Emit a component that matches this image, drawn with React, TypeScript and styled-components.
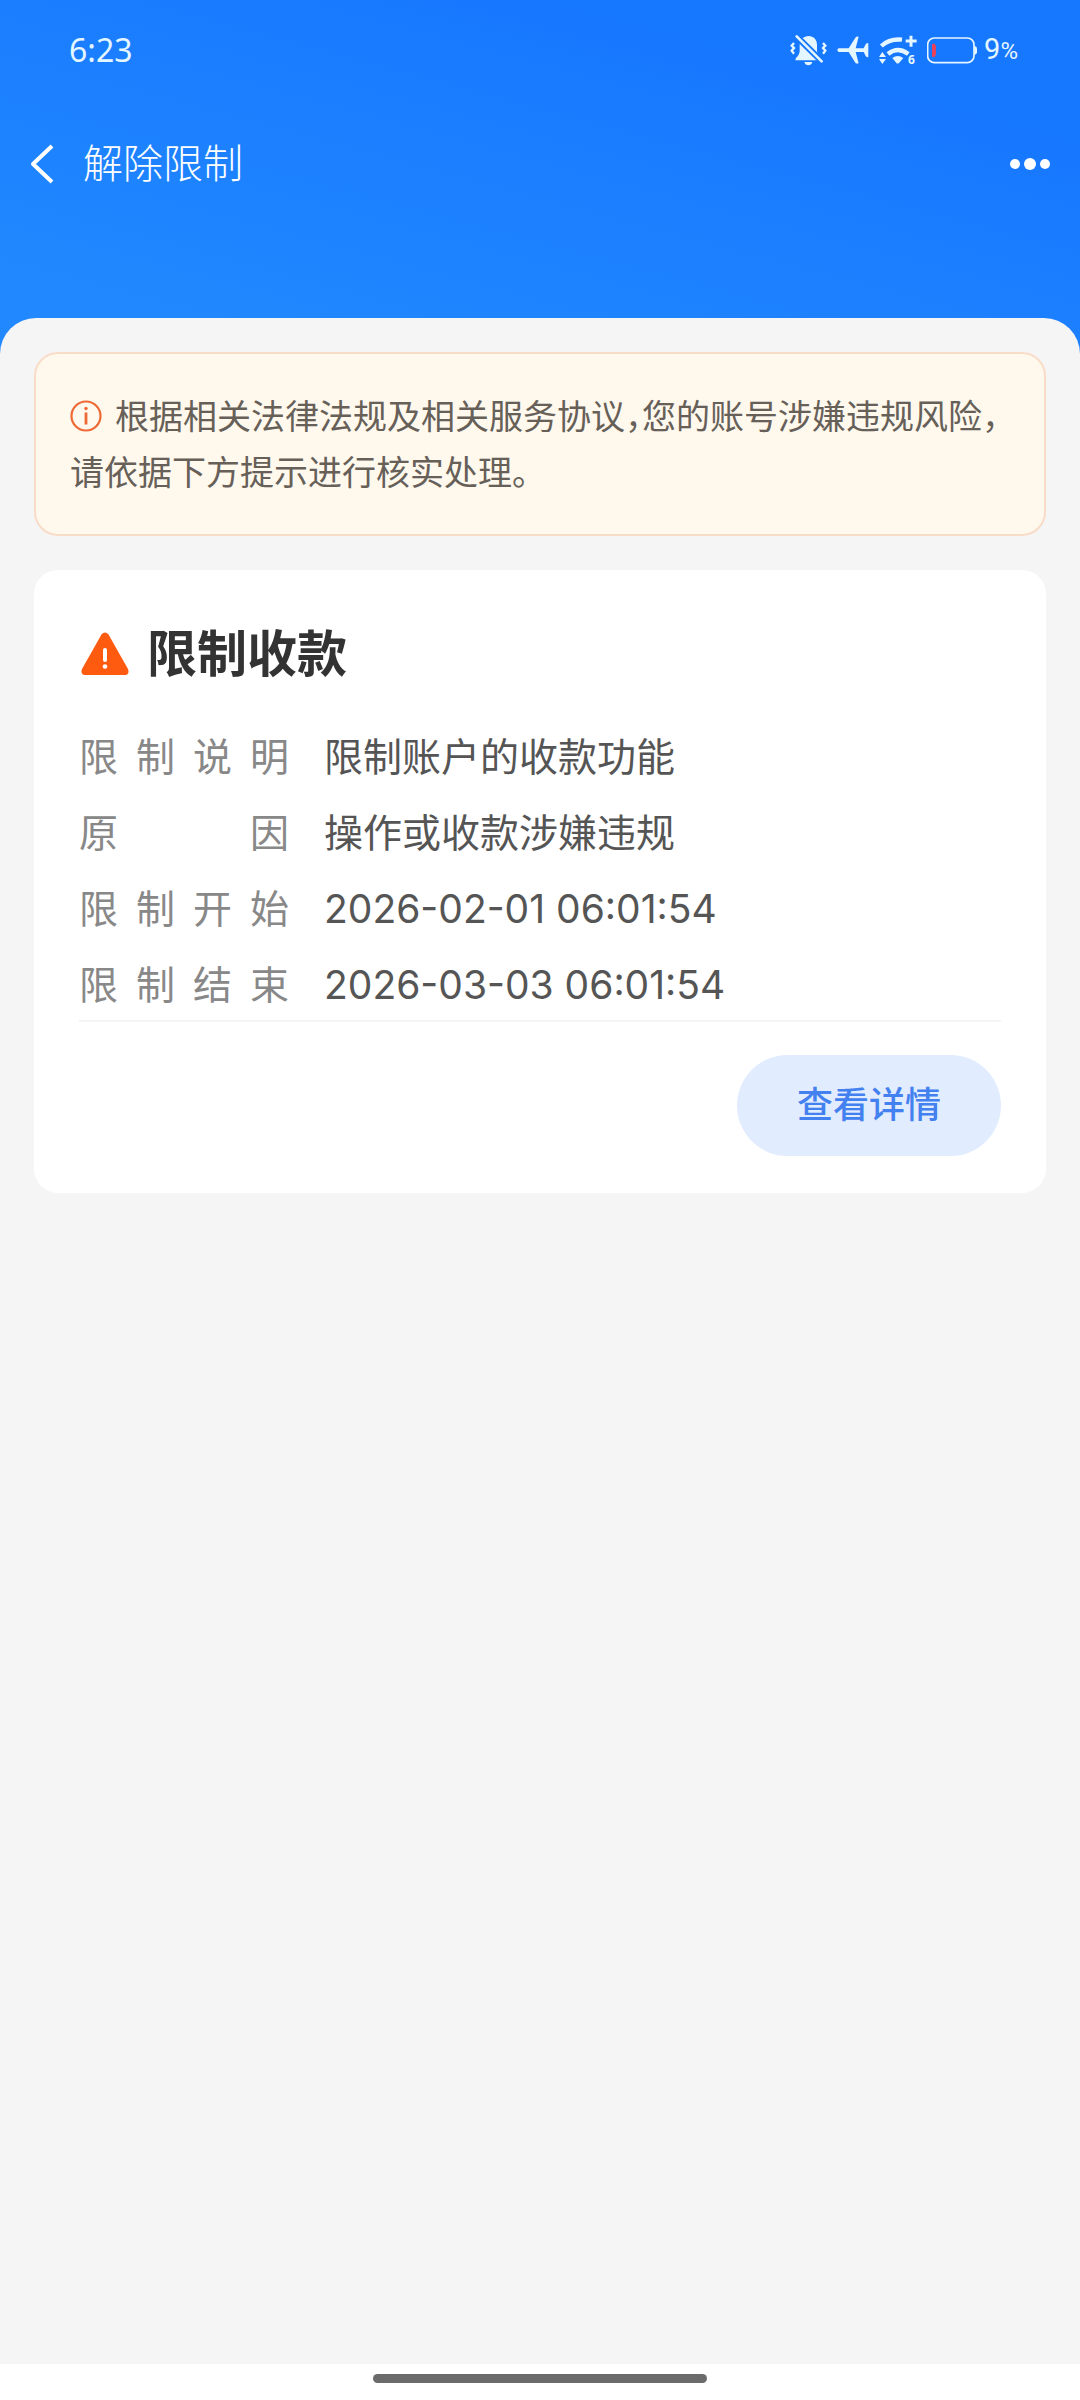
import React from "react";
import styled, { createGlobalStyle } from "styled-components";

const GlobalStyle = createGlobalStyle`
  *, *::before, *::after { box-sizing: border-box; }
  body {
    margin: 0;
    background: #f5f5f5;
    font-family: Inter, "Noto Sans CJK SC", sans-serif;
  }
`;

const Page = styled.div`
  display: flex;
  flex-direction: column;
  min-height: 100vh;
`;

const Hero = styled.header`
  padding-bottom: 152px;
  background: linear-gradient(195deg, #1677ff 20%, #1b7eff 46%, #2188ff 85%);
`;

const StatusBar = styled.div`
  display: flex;
  justify-content: space-between;
  align-items: center;
  height: 100px;
  padding: 0 62px 0 69px;
  color: #e4f6ff;
`;

const Clock = styled.time`
  font-family: "Noto Sans", sans-serif;
  font-size: 32px;
  line-height: 40px;
`;

const StatusIcons = styled.div`
  display: flex;
  align-items: center;
  gap: 10px;

  svg { display: block; }
`;

const BatteryLevel = styled.span`
  margin-left: -3px;
  font-family: Roboto, sans-serif;
  font-size: 29px;
  line-height: 40px;

  small { font-size: 24px; }
`;

const NavBar = styled.nav`
  display: flex;
  align-items: center;
  height: 100px;
  padding: 0 27px;
  margin-top: 14px;
`;

const IconButton = styled.button`
  display: flex;
  padding: 0;
  border: 0;
  background: none;
  color: #fff;
`;

const PageTitle = styled.h1`
  flex: 1;
  margin: 0 0 0 26px;
  color: #fff;
  font-size: 40px;
  font-weight: 300;
  line-height: 60px;
`;

const Sheet = styled.main`
  flex: 1;
  display: flex;
  flex-direction: column;
  gap: 34px;
  margin-top: -48px;
  padding: 34px;
  border-radius: 36px 36px 0 0;
  background: #f5f5f5;
`;

const Notice = styled.p`
  margin: 0;
  padding: 35px 34px 33px;
  border: 2px solid #f8dcc8;
  border-radius: 24px;
  background: #fff8ec;
  color: #666059;
  font-size: 34px;
  line-height: 56px;
  font-feature-settings: "halt";

  svg {
    margin-right: 13px;
    vertical-align: -3px;
  }
`;

const Card = styled.section`
  padding: 44px 45px 37px;
  border-radius: 24px;
  background: #fff;
`;

const CardTitle = styled.h2`
  display: flex;
  align-items: center;
  gap: 18px;
  margin: 0 0 33px;
  padding-left: 2px;
  color: #333;
  font-size: 50px;
  font-weight: 700;
  line-height: 80px;
`;

const Details = styled.dl`
  display: grid;
  grid-template-columns: 210px 1fr;
  column-gap: 35px;
  row-gap: 16px;
  margin: 0;
  padding-bottom: 5px;
  border-bottom: 2px solid #f5f5f5;
  font-size: 39px;
  line-height: 60px;
`;

const Label = styled.dt`
  color: #888;
  text-align: justify;
  text-align-last: justify;
`;

const Value = styled.dd`
  margin: 0;
  color: #555;
`;

const CardFooter = styled.div`
  display: flex;
  justify-content: flex-end;
  padding-top: 33px;
`;

const PillButton = styled.button`
  padding: 20px 60px;
  border: 0;
  border-radius: 51px;
  background: #e1ecff;
  color: #4380f0;
  font-family: inherit;
  font-size: 36px;
  font-weight: 500;
  line-height: 61px;
`;

const HomeBar = styled.footer`
  display: flex;
  justify-content: center;
  height: 36px;
  padding-top: 10px;
  background: #fff;
`;

const HomeHandle = styled.span`
  width: 334px;
  height: 9px;
  border-radius: 5px;
  background: #6b6b6b;
`;

const MutedBellIcon = () => (
  <svg width="37" height="32" viewBox="32 38 111 96" fill="currentColor" aria-hidden="true">
    <mask id="bell-cut" maskUnits="userSpaceOnUse" x="30" y="36" width="115" height="100">
      <rect x="30" y="36" width="115" height="100" fill="#fff" />
      <path d="M40 34L140 132" stroke="#000" strokeWidth="19" />
    </mask>
    <g mask="url(#bell-cut)">
      <path d="M88 44C103 44 113 55 113 70V88C113 98 122 104 124 112Q124 117 119 117H51Q46 117 50 110C56 103 61 98 61 88V70C61 55 73 44 88 44Z" />
    </g>
    <path d="M75 122H99Q96 132 87 132T75 122Z" />
    <path d="M52 45L127 120" fill="none" stroke="currentColor" strokeWidth="8" strokeLinecap="round" />
    <path
      d="M44 65L37 73L44 80L37 88L44 97M131 65L138 73L131 80L138 88L131 97"
      fill="none"
      stroke="currentColor"
      strokeWidth="7"
    />
  </svg>
);

const PlaneIcon = () => (
  <svg width="32" height="28" viewBox="176 47 96 84" fill="currentColor" aria-hidden="true">
    <path d="M181 84H211L231 52Q234 48 241 49L232 84H256L262 72Q264 68 270 68V111Q264 111 262 107L256 95H232L241 129Q234 131 231 127L211 95H181Q173 89 181 84Z" />
  </svg>
);

const WifiIcon = () => (
  <svg width="38" height="38" viewBox="300 32 114 114" fill="currentColor" aria-hidden="true">
    <g fill="none" stroke="currentColor" strokeWidth="13">
      <path d="M307 77Q332 54 369 58" />
      <path d="M327 101Q356 77 388 101" />
    </g>
    <path d="M340 113Q356 101 373 113L360 128Q356 131 352 128Z" />
    <path d="M396 46V79M380 62H413" stroke="currentColor" strokeWidth="9" />
    <path d="M310 95L321 110H300ZM300 116H321L310 131Z" />
    <text x="387" y="132" fontFamily="Noto Sans, sans-serif" fontSize="36" fontWeight="700">6</text>
  </svg>
);

const BatteryIcon = () => (
  <svg width="50" height="27" viewBox="441 50 150 81" aria-hidden="true">
    <rect x="443" y="53" width="139" height="74" rx="20" fill="none" stroke="currentColor" strokeWidth="5" />
    <path d="M583 76Q591 78 591 84V96Q591 102 583 104Z" fill="currentColor" />
    <path d="M459 70H465V75H468V105H465V110H459Q456 110 456 106V74Q456 70 459 70Z" fill="#e8415a" />
  </svg>
);

const BackIcon = () => (
  <svg width="30" height="42" viewBox="0 0 30 42" fill="none" stroke="currentColor" strokeWidth="4" aria-hidden="true">
    <path d="M25 3L6 21L25 39" strokeLinejoin="round" />
  </svg>
);

const MoreIcon = () => (
  <svg width="44" height="20" viewBox="0 0 44 20" fill="currentColor" aria-hidden="true">
    <circle cx="6" cy="10" r="5" />
    <circle cx="21" cy="10" r="6" />
    <circle cx="36" cy="10" r="5" />
  </svg>
);

const InfoIcon = () => (
  <svg width="32" height="32" viewBox="0 0 32 32" fill="none" stroke="#ee6a35" aria-hidden="true">
    <circle cx="16" cy="16" r="14.5" strokeWidth="2.2" />
    <path d="M16 12.5V24.5" strokeWidth="2.8" />
    <circle cx="16" cy="8.5" r="1.7" fill="#ee6a35" stroke="none" />
  </svg>
);

const WarningIcon = () => (
  <svg width="48" height="44" viewBox="0 0 48 44" aria-hidden="true">
    <path d="M20.5 2.5Q24-1.5 27.5 2.5L47 37Q49 43 43 43H5Q-1 43 1 37Z" fill="#ff5b10" />
    <path d="M24 18V28" stroke="#fff" strokeWidth="4" strokeLinecap="round" />
    <circle cx="24" cy="34.5" r="2.3" fill="#fff" />
  </svg>
);

const details = [
  { label: "限制说明", value: "限制账户的收款功能" },
  { label: "原因", value: "操作或收款涉嫌违规" },
  { label: "限制开始", value: "2026-02-01 06:01:54" },
  { label: "限制结束", value: "2026-03-03 06:01:54" },
];

export default function App() {
  return (
    <Page lang="zh-CN">
      <GlobalStyle />
      <Hero>
        <StatusBar>
          <Clock>6:23</Clock>
          <StatusIcons>
            <MutedBellIcon />
            <PlaneIcon />
            <WifiIcon />
            <BatteryIcon />
            <BatteryLevel>
              9<small>%</small>
            </BatteryLevel>
          </StatusIcons>
        </StatusBar>
        <NavBar>
          <IconButton type="button" aria-label="返回">
            <BackIcon />
          </IconButton>
          <PageTitle>解除限制</PageTitle>
          <IconButton type="button" aria-label="更多">
            <MoreIcon />
          </IconButton>
        </NavBar>
      </Hero>
      <Sheet>
        <Notice>
          <InfoIcon />
          根据相关法律法规及相关服务协议，您的账号涉嫌违规风险，请依据下方提示进行核实处理。
        </Notice>
        <Card>
          <CardTitle>
            <WarningIcon />
            限制收款
          </CardTitle>
          <Details>
            {details.map(({ label, value }) => (
              <React.Fragment key={label}>
                <Label>{label}</Label>
                <Value>{value}</Value>
              </React.Fragment>
            ))}
          </Details>
          <CardFooter>
            <PillButton type="button">查看详情</PillButton>
          </CardFooter>
        </Card>
      </Sheet>
      <HomeBar>
        <HomeHandle />
      </HomeBar>
    </Page>
  );
}
